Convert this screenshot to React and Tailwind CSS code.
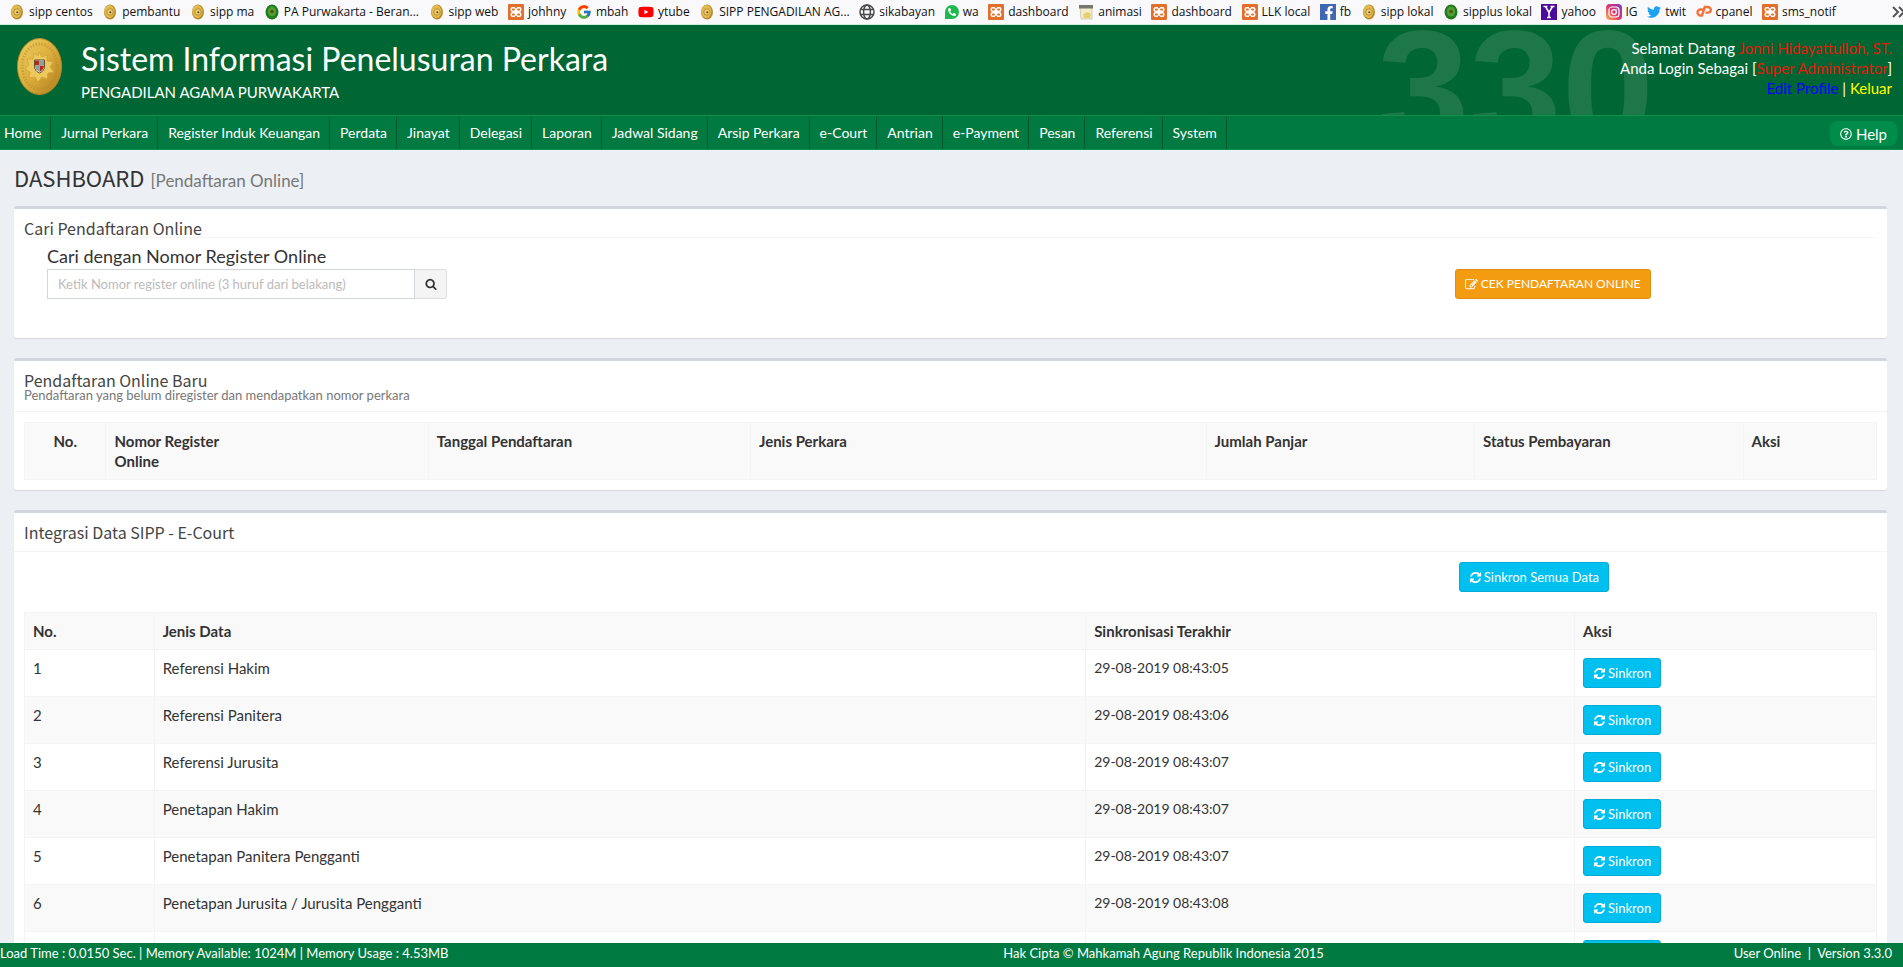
import { FaRegQuestionCircle, FaFacebookF, FaTwitter, FaPhoneAlt, FaYoutube } from 'react-icons/fa';
import { FcGoogle } from 'react-icons/fc';

const Court = () => (
  <svg viewBox="0 0 16 16" className="size-4 shrink-0">
    <ellipse cx="8" cy="8" rx="6" ry="7.5" fill="#b98a2a"/>
    <ellipse cx="7.400" cy="7.400" rx="5" ry="6.500" fill="#dfba52"/>
    <circle cx="8" cy="8" r="3.200" fill="#ecd078" stroke="#b3801c" strokeWidth=".8"/>
    <circle cx="8.300" cy="8.200" r="1" fill="#5c3b16"/>
  </svg>
);

const CourtGreen = () => (
  <svg viewBox="0 0 16 16" className="size-4 shrink-0">
    <ellipse cx="8" cy="8" rx="6.500" ry="7.500" fill="#1f7a1f"/>
    <ellipse cx="8" cy="7.600" rx="4.200" ry="5" fill="#46a035"/>
    <circle cx="8" cy="7.600" r="2.400" fill="#2b6b1c" stroke="#a8892f" strokeWidth=".8"/>
  </svg>
);

const Xampp = () => (
  <svg viewBox="0 0 16 16" className="size-4 shrink-0">
    <rect width="16" height="16" rx="1" fill="#e2702c"/>
    <rect x="3.200" y="3.700" width="4.400" height="3.600" rx="1.600" fill="none" stroke="#fff" strokeWidth="1.500"/>
    <rect x="8.400" y="3.700" width="4.400" height="3.600" rx="1.600" fill="none" stroke="#fff" strokeWidth="1.500"/>
    <rect x="3.200" y="8.700" width="4.400" height="3.600" rx="1.600" fill="none" stroke="#fff" strokeWidth="1.500"/>
    <rect x="8.400" y="8.700" width="4.400" height="3.600" rx="1.600" fill="none" stroke="#fff" strokeWidth="1.500"/>
    <path d="M6.500 6.500h3v3h-3z" fill="#fff"/>
    <path d="M7.200 2.500h1.600v1.800H7.200zM7.200 11.700h1.600v1.800H7.200z" fill="#e2702c"/>
  </svg>
);

const Globe = () => (
  <svg viewBox="0 0 16 16" className="size-4 shrink-0" fill="none" stroke="#4a4a4f" strokeWidth="1.500">
    <circle cx="8" cy="8" r="7"/>
    <ellipse cx="8" cy="8" rx="3.400" ry="7"/>
    <path d="M1.800 5.500h12.400M1.800 10.500h12.400"/>
  </svg>
);

const Whatsapp = () => (
  <span className="flex size-3.5 shrink-0 items-center justify-center rounded-full rounded-bl-xs bg-[#1fb84f]"><FaPhoneAlt className="size-2 text-white"/></span>
);

const Notepad = () => (
  <svg viewBox="0 0 16 16" className="size-4 shrink-0">
    <path d="M2 3h12v12H3z" fill="#f3ecc9" stroke="#b9b48f" strokeWidth=".6"/>
    <path d="M1 1h14v3.500H1z" fill="#77776f"/>
    <path d="M5 10l5-2 3 2-1 4H6z" fill="#e6cf72"/>
  </svg>
);

const Facebook = () => (
  <span className="flex size-4 shrink-0 items-end justify-end bg-[#4267b2]"><FaFacebookF className="size-3.5 text-white"/></span>
);

const Yahoo = () => (
  <svg viewBox="0 0 16 16" className="size-4 shrink-0">
    <path d="M0 0h16v16H0z" fill="#4a0a9c"/>
    <path d="M2.500 2.500h4M9.500 2.500h4M4.500 2.500L8 8.500l3.500-6M8 8.500V13.500M6 13.500h4" fill="none" stroke="#fff" strokeWidth="1.500"/>
  </svg>
);

const Instagram = () => (
  <svg viewBox="0 0 16 16" className="size-4 shrink-0">
    <defs>
      <linearGradient id="ig" x1="0" y1="1" x2="1" y2="0">
        <stop offset="0" stopColor="#fdb94e"/>
        <stop offset=".5" stopColor="#e1306c"/>
        <stop offset="1" stopColor="#7a3bc4"/>
      </linearGradient>
    </defs>
    <rect width="16" height="16" rx="4" fill="url(#ig)"/>
    <rect x="3" y="3" width="10" height="10" rx="3" fill="none" stroke="#fff" strokeWidth="1.200"/>
    <circle cx="8" cy="8" r="2.400" fill="none" stroke="#fff" strokeWidth="1.200"/>
    <circle cx="10.900" cy="5.100" r=".6" fill="#fff"/>
  </svg>
);

const Cpanel = () => (
  <svg viewBox="0 0 16 16" className="size-4 shrink-0" fill="none" stroke="#f4743b" strokeWidth="2.400">
    <path d="M7 5.500H4.500a3 3 0 0 0 0 6H6L8.800 3H12a2.700 2.700 0 0 1 0 5.600H9.500"/>
  </svg>
);

const Youtube = () => <FaYoutube className="size-4 shrink-0 text-[#f00]"/>;
const Google = () => <FcGoogle className="size-4 shrink-0"/>;
const Twitter = () => <FaTwitter className="size-3.5 shrink-0 text-[#1da1f2]"/>;

const bookmarks = [
  { name: 'sipp centos', icon: Court },
  { name: 'pembantu', icon: Court },
  { name: 'sipp ma', icon: Court },
  { name: 'PA Purwakarta - Beran...', icon: CourtGreen },
  { name: 'sipp web', icon: Court },
  { name: 'johhny', icon: Xampp },
  { name: 'mbah', icon: Google },
  { name: 'ytube', icon: Youtube },
  { name: 'SIPP PENGADILAN AG...', icon: Court },
  { name: 'sikabayan', icon: Globe },
  { name: 'wa', icon: Whatsapp },
  { name: 'dashboard', icon: Xampp },
  { name: 'animasi', icon: Notepad },
  { name: 'dashboard', icon: Xampp },
  { name: 'LLK local', icon: Xampp },
  { name: 'fb', icon: Facebook },
  { name: 'sipp lokal', icon: Court },
  { name: 'sipplus lokal', icon: CourtGreen },
  { name: 'yahoo', icon: Yahoo },
  { name: 'IG', icon: Instagram },
  { name: 'twit', icon: Twitter },
  { name: 'cpanel', icon: Cpanel },
  { name: 'sms_notif', icon: Xampp },
];

const nav = ['Home', 'Jurnal Perkara', 'Register Induk Keuangan', 'Perdata', 'Jinayat', 'Delegasi', 'Laporan', 'Jadwal Sidang', 'Arsip Perkara', 'e-Court', 'Antrian', 'e-Payment', 'Pesan', 'Referensi', 'System'];

const rows = [
  ['Referensi Hakim', '29-08-2019 08:43:05'],
  ['Referensi Panitera', '29-08-2019 08:43:06'],
  ['Referensi Jurusita', '29-08-2019 08:43:07'],
  ['Penetapan Hakim', '29-08-2019 08:43:07'],
  ['Penetapan Panitera Pengganti', '29-08-2019 08:43:07'],
  ['Penetapan Jurusita / Jurusita Pengganti', '29-08-2019 08:43:08'],
  ['', ''],
];

const Refresh = () => (
  <svg viewBox="0 0 1792 1792" className="size-[13px] fill-current">
    <path d="M1639 1056q0 5-1 7-64 268-268 434.500t-478 166.500q-146 0-282.500-55t-243.500-157l-129 129q-19 19-45 19t-45-19-19-45v-448q0-26 19-45t45-19h448q26 0 45 19t19 45-19 45l-137 137q71 66 161 102t187 36q134 0 250-65t186-179q11-17 53-117 8-23 30-23h192q13 0 22.500 9.500t9.500 22.500zm25-800v448q0 26-19 45t-45 19h-448q-26 0-45-19t-19-45 19-45l138-138q-148-137-349-137-134 0-250 65t-186 179q-11 17-53 117-8 23-30 23h-199q-13 0-22.500-9.500t-9.500-22.500v-7q65-268 270-434.500t480-166.500q146 0 284 55.500t245 156.500l130-129q19-19 45-19t45 19 19 45z"/>
  </svg>
);

const PencilSquare = () => (
  <svg viewBox="0 0 1792 1792" className="size-[13px] fill-current">
    <path d="M888 1184l116-116-152-152-116 116v56h96v96h56zm440-720q-16-16-33 1l-350 350q-17 17-1 33t33-1l350-350q17-17 1-33zm80 594v190q0 119-84.500 203.500t-203.500 84.500h-832q-119 0-203.500-84.500t-84.500-203.500v-832q0-119 84.500-203.500t203.500-84.500h832q63 0 117 25 15 7 18 23 3 17-9 29l-49 49q-14 14-32 8-23-6-45-6h-832q-66 0-113 47t-47 113v832q0 66 47 113t113 47h832q66 0 113-47t47-113v-126q0-13 9-22l64-64q15-15 35-7t20 29zm-96-738l288 288-672 672h-288v-288zm444 132l-92 92-288-288 92-92q28-28 68-28t68 28l152 152q28 28 28 68t-28 68z"/>
  </svg>
);

const Search = () => (
  <svg viewBox="0 0 1792 1792" className="size-3 fill-current">
    <path d="M1216 832q0-185-131.500-316.500t-316.500-131.500-316.500 131.500-131.500 316.500 131.500 316.500 316.500 131.500 316.500-131.500 131.500-316.500zm512 832q0 52-38 90t-90 38q-54 0-90-38l-343-342q-179 124-399 124-143 0-273.500-55.500t-225-150-150-225-55.500-273.500 55.500-273.500 150-225 225-150 273.500-55.500 273.500 55.500 225 150 150 225 55.500 273.500q0 220-124 399l343 343q37 37 37 90z"/>
  </svg>
);

const Logo = () => (
  <svg viewBox="0 0 45 57" className="h-[57px] w-[45px]">
    <defs>
      <linearGradient id="gold" x1="0" y1="0" x2="1" y2="1">
        <stop offset="0" stopColor="#f0cf62"/>
        <stop offset=".5" stopColor="#dcae3c"/>
        <stop offset="1" stopColor="#b07a1c"/>
      </linearGradient>
    </defs>
    <ellipse cx="22.500" cy="28.500" rx="22" ry="28" fill="url(#gold)" stroke="#b98a2a"/>
    <ellipse cx="22.500" cy="28.500" rx="17.500" ry="22.500" fill="none" stroke="#b88a2e" strokeWidth="3" strokeDasharray="1.500 1.500" opacity=".5"/>
    <path d="M22 14l3 5 5-2 0 6 6 1-3 5 4 5-6 1-1 6-5-2-4 5-3-5-6 1 1-6-5-3 4-4-2-6 6 0 1-6 4 3z" fill="#ecc95c" stroke="#cfa03a" strokeWidth=".7"/>
    <path d="M17.500 22h10v6q0 5-5 7-5-2-5-7z" fill="#fff" stroke="#3b2a1a" strokeWidth=".8"/>
    <path d="M18 22.500h4.500v5H18zM22.500 27.500H27q0 4-4.500 6.500z" fill="#b22a22"/>
    <path d="M22.500 22.500H27v5h-4.500zM18 27.500h4.500V34q-4.500-2-4.500-6.500z" fill="#8fa095"/>
  </svg>
);

const SyncButton = ({ label }) => (
  <button className="flex h-[30px] items-center gap-0.5 rounded-[3px] border border-[#00acd6] bg-[#00c0ef] px-[9px] text-[13px] text-white">
    <Refresh/>{label}
  </button>
);

const Box = ({ children }) => (
  <section className="rounded-[3px] border-t-3 border-[#d2d6de] bg-white shadow-[0_1px_1px_rgba(0,0,0,0.1)]">{children}</section>
);

const boxTitle = "font-['Noto_Sans_CJK_SC',sans-serif] text-[16px] leading-[18px] text-[#444]";
const th = 'border border-[#f4f4f4] px-2 pt-2 text-left align-top font-bold';
const td = 'border border-[#f4f4f4] px-2 pt-2 align-top';

export default function App() {
  return (
    <div className="flex h-screen flex-col overflow-hidden bg-[#ecf0f5] font-['Lato',sans-serif] text-[15px] leading-5 text-[#333]">
      <nav aria-label="Bookmarks" className="flex h-[25px] shrink-0 items-center border-b border-[#c9efd9] bg-[#f9f9fb] pl-[9px] font-['Open_Sans',sans-serif] text-[12px] text-[#111]">
        <div className="flex flex-1 justify-between">
          {bookmarks.map((b, i) => (
            <a key={i} href="#" className="flex shrink-0 items-center gap-1 whitespace-nowrap"><b.icon/>{b.name}</a>
          ))}
        </div>
        <button aria-label="More bookmarks" className="ml-14 w-[11px] overflow-hidden">
          <svg viewBox="0 0 14 12" className="h-3 w-3.5" fill="none" stroke="#555" strokeWidth="2"><path d="M1 1l5 5-5 5M7 1l5 5-5 5"/></svg>
        </button>
      </nav>

      <header className="relative flex h-[90px] shrink-0 justify-between overflow-hidden bg-[#006633] pr-[11px] pl-[17px] text-white">
        <span aria-hidden="true" className="absolute top-[-20px] right-[249px] font-['Liberation_Sans',sans-serif] text-[166px] leading-none font-bold text-[#1e7749]">330</span>
        <div className="flex gap-[19px] pt-[13px]">
          <Logo/>
          <div>
            <h1 className="pt-1 text-[32px] leading-[34px]">Sistem Informasi Penelusuran Perkara</h1>
            <p className="mt-1.5 text-[15px]">PENGADILAN AGAMA PURWAKARTA</p>
          </div>
        </div>
        <div className="relative pt-[13px] text-right">
          <p>Selamat Datang <span className="text-[#e01a0c]">Jonni Hidayattulloh, ST.</span></p>
          <p>Anda Login Sebagai [<span className="text-[#e01a0c]">Super Administrator</span>]</p>
          <p><a href="#" className="text-[#0000ff]">Edit Profile</a> | <a href="#" className="text-[#ffff00]">Keluar</a></p>
        </div>
      </header>

      <nav aria-label="Main" className="flex h-[35px] shrink-0 border-t border-b border-[#0d8f4c] bg-[#007a40] pr-[6px] text-[14px] text-white">
        {nav.map((name, i) => (
          <a key={name} href="#" className={`flex items-center border-r border-[#00572c] pr-[9px] ${i === 0 ? 'pl-1' : 'pl-[10px]'}`}>{name}</a>
        ))}
        <a href="#" className="mt-[5px] mb-[3px] ml-auto flex items-center gap-1 rounded-lg bg-[#008d4c] px-[10px] text-[15px]">
          <FaRegQuestionCircle className="size-3"/>Help
        </a>
      </nav>

      <main className="min-h-0 flex-1 overflow-hidden pr-4 pl-[14px]">
        <div className="flex h-14 items-baseline gap-1.5 pt-[15px]">
          <h2 className="font-['Noto_Sans_CJK_SC',sans-serif] text-[22px] leading-6">DASHBOARD</h2>
          <small className="text-[17px] text-[#777]">[Pendaftaran Online]</small>
        </div>

        <div className="flex flex-col gap-5">
          <Box>
            <div className="h-[129px] px-[10px] pt-[10px]">
              <h3 className={`border-b border-[#f4f4f4] ${boxTitle}`}>Cari Pendaftaran Online</h3>
              <div className="grid grid-cols-[77%_1fr] items-end pt-2">
                <div className="pl-[23px]">
                  <label htmlFor="register" className="mb-[3px] block text-[18px]">Cari dengan Nomor Register Online</label>
                  <div className="flex w-[400px]">
                    <input id="register" type="text" placeholder="Ketik Nomor register online (3 huruf dari belakang)" className="h-[30px] flex-1 border border-[#d2d6de] px-[10px] text-[13px] placeholder:text-[#bbb]"/>
                    <button aria-label="Cari" className="flex w-8 items-center justify-center rounded-r-[3px] border border-l-0 border-[#ddd] bg-[#f4f4f4] text-[#333]"><Search/></button>
                  </div>
                </div>
                <div className="pl-1">
                  <button className="flex h-[30px] items-center gap-[3px] rounded-[3px] border border-[#e08e0b] bg-[#f39c12] px-[9px] text-[12px] text-white"><PencilSquare/>CEK PENDAFTARAN ONLINE</button>
                </div>
              </div>
            </div>
          </Box>

          <Box>
            <div className="border-b border-[#f4f4f4] p-[10px]">
              <h3 className={boxTitle}>Pendaftaran Online Baru</h3>
              <p className="text-[13px] leading-3 text-[#777]">Pendaftaran yang belum diregister dan mendapatkan nomor perkara</p>
            </div>
            <div className="p-[10px]">
              <table className="w-full table-fixed border-collapse bg-[#f9f9f9]">
                <thead>
                  <tr className="h-[57px]">
                    <th className="w-[4.4%] border border-[#f4f4f4] pt-2 text-center align-top">No.</th>
                    <th className={`${th} w-[17.4%]`}>Nomor Register<br/>Online</th>
                    <th className={`${th} w-[17.4%]`}>Tanggal Pendaftaran</th>
                    <th className={`${th} w-[24.6%]`}>Jenis Perkara</th>
                    <th className={`${th} w-[14.5%]`}>Jumlah Panjar</th>
                    <th className={`${th} w-[14.5%]`}>Status Pembayaran</th>
                    <th className={th}>Aksi</th>
                  </tr>
                </thead>
              </table>
            </div>
          </Box>

          <Box>
            <h3 className={`border-b border-[#f4f4f4] p-[10px] ${boxTitle}`}>Integrasi Data SIPP - E-Court</h3>
            <div className="p-[10px]">
              <div className="grid grid-cols-[77%_1fr] pb-5">
                <div className="col-start-2 pl-2"><SyncButton label="Sinkron Semua Data"/></div>
              </div>
              <table className="w-full table-fixed border-collapse">
                <thead>
                  <tr className="h-[37px] bg-[#f9f9f9]">
                    <th className={`${th} w-[7%]`}>No.</th>
                    <th className={`${th} w-[50.3%]`}>Jenis Data</th>
                    <th className={`${th} w-[26.4%]`}>Sinkronisasi Terakhir</th>
                    <th className={th}>Aksi</th>
                  </tr>
                </thead>
                <tbody>
                  {rows.map(([name, time], i) => (
                    <tr key={i} className="h-[47px] even:bg-[#f9f9f9]">
                      <td className={td}>{name && i + 1}</td>
                      <td className={td}>{name}</td>
                      <td className={`${td} text-[14px]`}>{time}</td>
                      <td className={td}><SyncButton label="Sinkron"/></td>
                    </tr>
                  ))}
                </tbody>
              </table>
            </div>
          </Box>
        </div>
      </main>

      <footer className="grid h-6 shrink-0 grid-cols-[45%_33%_22%] bg-[#007a40] pr-[11px] text-[13px] text-white">
        <span>Load Time : 0.0150 Sec. | Memory Available: 1024M | Memory Usage : 4.53MB</span>
        <span className="text-center">Hak Cipta © Mahkamah Agung Republik Indonesia 2015</span>
        <span className="text-right">User Online&nbsp; |&nbsp; Version 3.3.0</span>
      </footer>
    </div>
  );
}
